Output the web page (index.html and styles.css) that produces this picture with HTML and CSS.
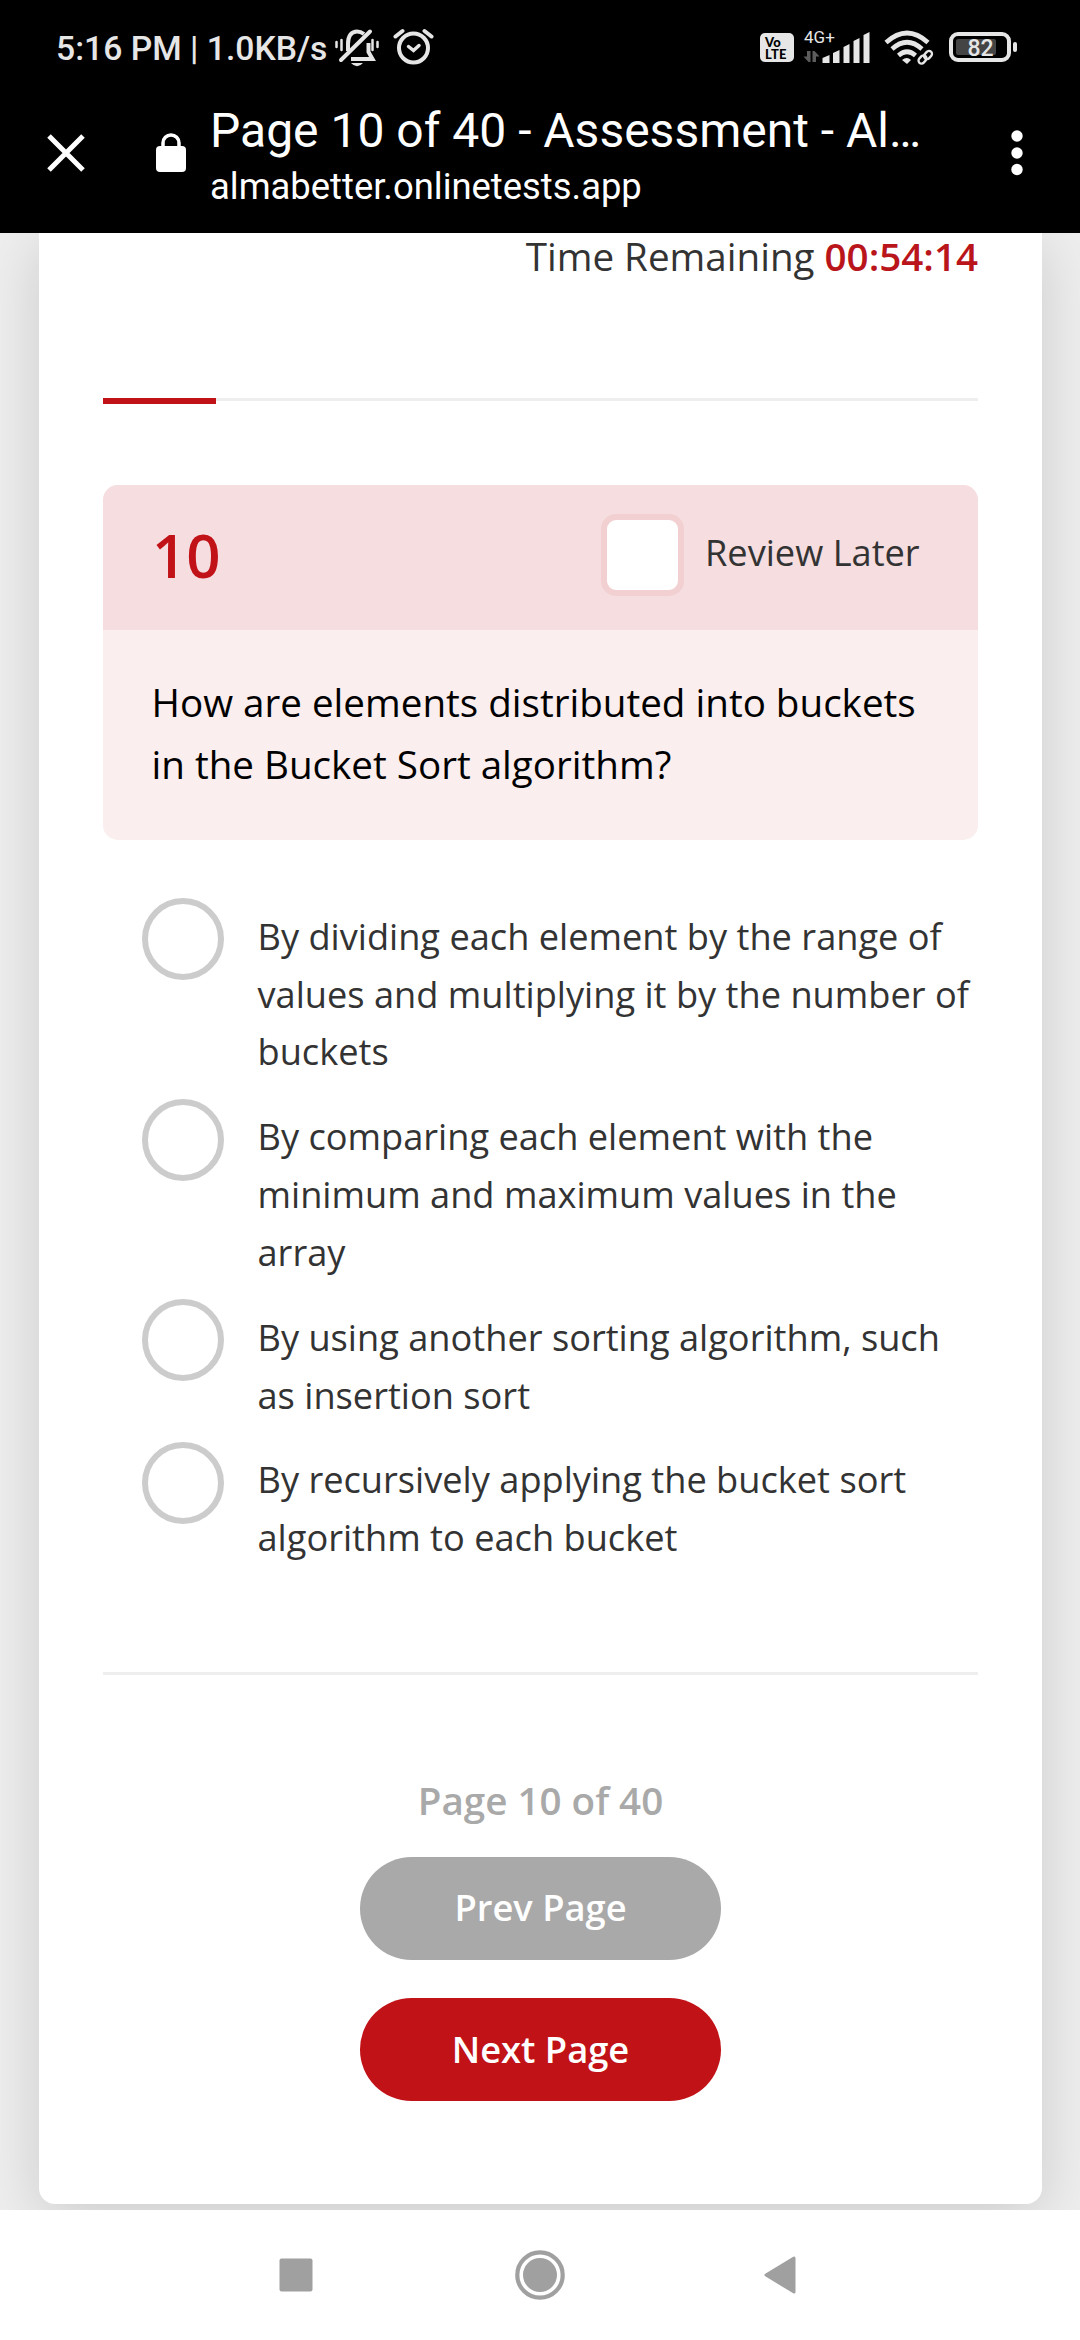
FILE: index.html
```html
<!DOCTYPE html>
<html lang="en">
<head>
<meta charset="utf-8">
<title>Page 10 of 40 - Assessment</title>
<link rel="stylesheet" href="styles.css">
</head>
<body>
<div class="screen">
  <header class="top">
    <div class="status">
      <span class="clock">5:16 PM | 1.0KB/s</span>
      <svg class="status-left" width="100" height="44" viewBox="334 26 100 44" fill="none" stroke="#e6e6e6">
        <path d="M348 51V44C348 35 352 31.500 357 31.500C360 31.500 362 32.500 364 34M368.500 43V52L372.500 59H351" stroke-width="4"/>
        <path d="M341 60L370 31.500" stroke-width="4" stroke-linecap="round"/>
        <path d="M336.500 42V47M341.500 40V50M372.500 40V50M377.500 42V47" stroke-width="2.500" stroke-linecap="round"/>
        <path d="M351 63H363Q357 69.500 351 63Z" fill="#e6e6e6" stroke="none"/>
        <circle cx="413.500" cy="48" r="14.500" stroke-width="4"/>
        <path d="M395.500 36.500L402.500 31M431.500 36.500L424.500 31" stroke-width="4" stroke-linecap="round"/>
        <path d="M408.500 46.500L413.500 50.500L419 45.500" stroke-width="3.500" stroke-linecap="round"/>
      </svg>
      <span class="volte"><span>Vo</span><span>LTE</span></span>
      <div class="signal">
        <span class="net">4G+</span>
        <svg width="68" height="33" viewBox="803 31 68 33">
          <path d="M810.500 51V62H808.500L803.500 56.500H807V51ZM812.500 62V51H814.500L819.500 56.500H816V62Z" fill="#5c5c5c"/>
          <path d="M822.500 63V58L829.500 55V63ZM833 63V53L839.500 50V63ZM843.500 63V47L849.500 44V63ZM853.500 63V41L859.500 38V63ZM863.500 63V35L869.500 32V63Z" fill="#e6e6e6"/>
        </svg>
      </div>
      <svg class="wifi" width="52" height="38" viewBox="883 29 52 38" fill="none" stroke="#e6e6e6">
        <path d="M886 42.500Q907 23.500 928 42.500M892 49Q907 35.500 922 49M898.500 55.500Q907 48 915.500 55.500" stroke-width="4.600"/>
        <path d="M902 60Q907 56 911 60L907 64Z" fill="#e6e6e6" stroke="none"/>
        <g stroke-width="2.300"><rect x="918" y="56.500" width="9" height="6" rx="3" transform="rotate(-48 922.500 59.500)"/><rect x="923.500" y="52" width="9" height="6" rx="3" transform="rotate(-48 928 55)"/></g>
      </svg>
      <div class="battery"><span class="level">82</span></div>
      <span class="cap"></span>
    </div>
    <div class="toolbar">
      <svg class="close" width="40" height="40" viewBox="0 0 40 40"><path d="M3 3L37 37M37 3L3 37" stroke="#fff" stroke-width="5"/></svg>
      <svg class="lock" width="30" height="39" viewBox="0 0 30 39"><path d="M7 15V10A8 8 0 0 1 23 10V15" fill="none" stroke="#fff" stroke-width="3.500"/><rect y="13" width="30" height="26" rx="4" fill="#fff"/></svg>
      <div class="titles"><div class="title">Page 10 of 40 - Assessment - Al…</div><div class="url">almabetter.onlinetests.app</div></div>
      <svg class="more" width="12" height="46" viewBox="0 0 12 46" fill="#fff"><circle cx="6" cy="6" r="5.700"/><circle cx="6" cy="23" r="5.700"/><circle cx="6" cy="39.500" r="5.700"/></svg>
    </div>
  </header>
  <main class="page">
    <section class="card">
      <div class="timer">Time Remaining <b>00:54:14</b></div>
      <div class="progress"><div class="bar"></div></div>
      <div class="question">
        <div class="qhead"><span class="num">10</span><span class="check"></span><span class="review">Review Later</span></div>
        <div class="qtext">How are elements distributed into buckets<br>in the Bucket Sort algorithm?</div>
      </div>
      <div class="options">
        <div class="option"><span class="radio"></span><span class="label">By dividing each element by the range of<br>values and multiplying it by the number of<br>buckets</span></div>
        <div class="option"><span class="radio"></span><span class="label">By comparing each element with the<br>minimum and maximum values in the<br>array</span></div>
        <div class="option"><span class="radio"></span><span class="label">By using another sorting algorithm, such<br>as insertion sort</span></div>
        <div class="option"><span class="radio"></span><span class="label">By recursively applying the bucket sort<br>algorithm to each bucket</span></div>
      </div>
      <div class="pager">
        <div class="count">Page 10 of 40</div>
        <div class="btn prev">Prev Page</div>
        <div class="btn next">Next Page</div>
      </div>
    </section>
  </main>
  <nav class="nav">
    <svg width="34" height="34" viewBox="0 0 34 34"><rect x=".5" y=".5" width="33" height="33" rx="2" fill="#a0a0a0"/></svg>
    <svg class="home" width="50" height="50" viewBox="0 0 50 50"><circle cx="25" cy="25" r="22.700" fill="none" stroke="#a0a0a0" stroke-width="4.200"/><circle cx="25" cy="25" r="17" fill="#a0a0a0"/></svg>
    <svg width="34" height="38" viewBox="0 0 34 38"><path d="M3 19L31 2V36Z" fill="#a0a0a0" stroke="#a0a0a0" stroke-width="3" stroke-linejoin="round"/></svg>
  </nav>
</div>
</body>
</html>
```
FILE: styles.css
```css
* { box-sizing: border-box; }
body { margin: 0; }
.screen { width: 1080px; height: 2340px; display: flex; flex-direction: column; font-family: "Open Sans", sans-serif; color: #333; white-space: nowrap; overflow: hidden; }

.top { height: 233px; background: #000; color: #fff; font-family: Roboto, sans-serif; flex: none; position: relative; z-index: 1; }
.status { height: 96px; display: flex; align-items: flex-start; color: #e6e6e6; padding-left: 56px; }
.clock { width: 278px; margin-top: 29px; font-size: 33.7px; line-height: 40px; font-weight: 500; }
.status-left { margin-top: 26px; }
.volte { margin: 33px 0 0 326px; width: 34px; height: 29px; border-radius: 5px; background: #e6e6e6; color: #000; font: 900 13px/12px Lato, sans-serif; letter-spacing: .3px; padding: 3px 0 0 5px; display: flex; flex-direction: column; }
.signal { display: grid; margin: 31px 0 0 9px; width: 68px; }
.signal > * { grid-area: 1 / 1; }
.net { font-size: 17px; line-height: 12px; padding-left: 1px; }
.wifi { margin: 29px 0 0 12px; }
.battery { margin: 32px 0 0 14px; width: 62px; height: 30px; border: 4px solid #e6e6e6; border-radius: 9px; padding: 3px; flex: none; }
.level { display: block; width: 40px; height: 16px; padding-left: 9px; background: #444; border-radius: 2px; font-size: 23px; line-height: 19px; font-weight: 500; text-align: center; }
.cap { width: 4px; height: 10px; margin: 42px 0 0 2px; border-radius: 2px; background: #e6e6e6; }

.toolbar { display: flex; align-items: flex-start; padding-left: 46px; }
.close { margin-top: 37px; }
.lock { margin: 37px 0 0 70px; }
.titles { margin: 7px 0 0 24px; width: 801px; }
.title { font-size: 48px; line-height: 56px; }
.url { font-size: 36.4px; line-height: 42px; margin-top: 7px; }
.more { margin-top: 34px; }

.page { flex: 1; background: #eee; padding: 0 38px 6px 39px; }
.card { height: 1971px; background: #fff; border-radius: 0 0 16px 16px; box-shadow: 0 12px 60px rgba(0,0,0,.15); padding: 0 64px; }
.timer { height: 165px; font-size: 38.6px; line-height: 47px; text-align: right; }
.timer b { font-weight: 600; color: #b9151b; }
.progress { height: 87px; border-top: 3px solid #eee; }
.bar { width: 113px; height: 6px; margin-top: -3px; background: #c11218; }
.question { height: 355px; border-radius: 15px; overflow: hidden; background: #faeeee; }
.qhead { height: 145px; background: #f5dde0; display: flex; align-items: center; padding-left: 49px; }
.num { width: 449px; margin-top: -6px; font-size: 60px; font-weight: 600; color: #c11218; }
.check { width: 83px; height: 82px; margin-top: -5px; border: 6px solid #f2cfd1; border-radius: 15px; background: #fff; }
.review { font-size: 36.2px; margin: -12px 0 0 21px; }
.qtext { padding: 41px 48.5px; font-size: 38.6px; line-height: 62.2px; color: #000; }
.options { height: 835px; padding: 58px 0 0 39px; border-bottom: 3px solid #eee; }
.option { display: flex; margin-bottom: 26.800px; }
.radio { width: 82px; height: 82px; border: 6px solid #ccc; border-radius: 50%; flex: none; margin-bottom: -10px; }
.label { margin: 9.6px 0 -9.6px 33.500px; font-size: 36.2px; line-height: 57.9px; }
.pager { display: flex; flex-direction: column; align-items: center; padding-top: 94px; }
.count { height: 88px; font-size: 38.6px; line-height: 62px; font-weight: 600; color: #a9a9a9; }
.btn { width: 361px; height: 103px; border-radius: 52px; font-size: 36.3px; line-height: 102px; font-weight: 600; color: #fff; text-align: center; margin-bottom: 38px; }
.prev { background: #a9a9a9; line-height: 101px; }
.next { background: #c11218; }

.nav { height: 130px; flex: none; background: #fff; display: flex; align-items: center; justify-content: space-between; padding: 0 283px 0 279px; position: relative; z-index: 1; }
.home { margin-left: 4px; }
```
